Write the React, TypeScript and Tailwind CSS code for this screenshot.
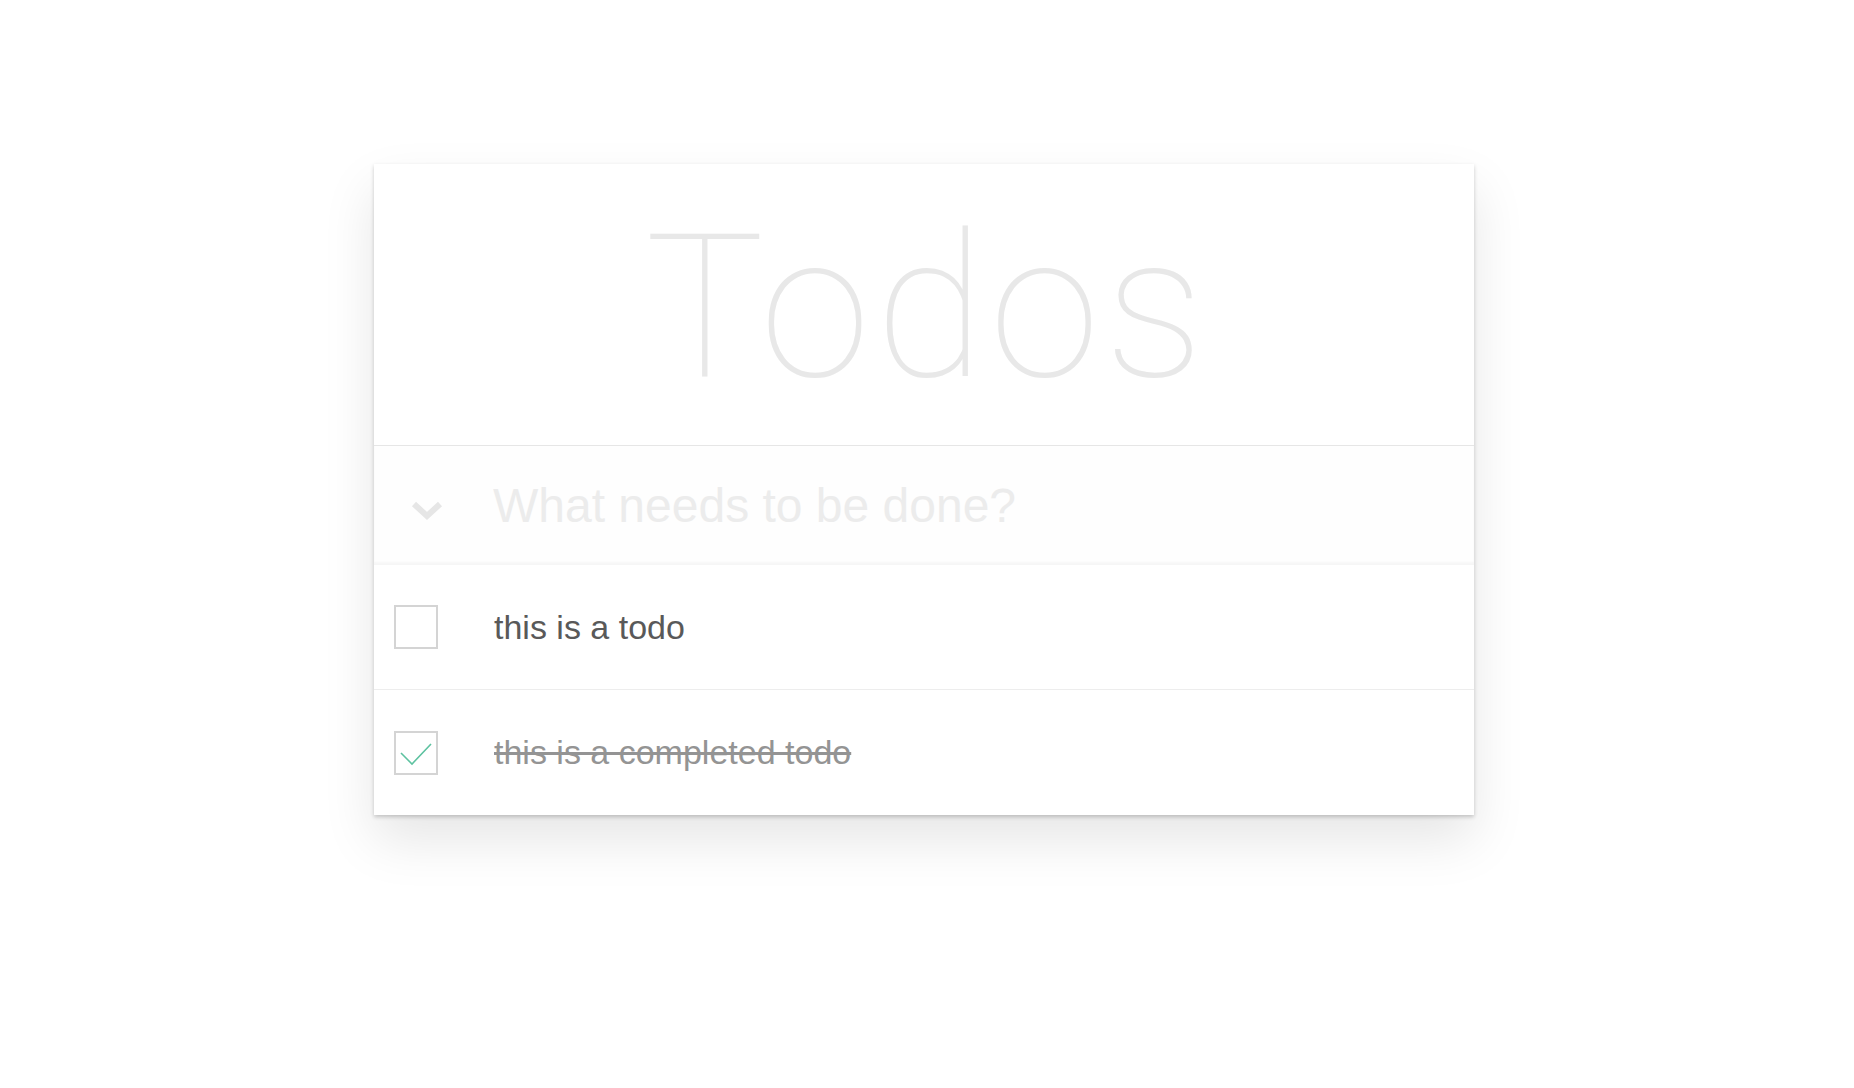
export default function App() {
  const todos = [
    { id: 1, title: "this is a todo", completed: false },
    { id: 2, title: "this is a completed todo", completed: true },
  ];

  return (
    <div className="min-h-screen bg-white pt-[164px] font-['Liberation_Sans',Arial,sans-serif]">
      <section className="ml-[374px] w-[1100px] bg-white shadow-[0_2px_4px_0_rgba(0,0,0,0.2),0_25px_50px_0_rgba(0,0,0,0.1)]">
        <header className="border-b border-[#e6e6e6]">
          <h1 className="h-[281px] pt-[44px] pl-[6px] text-center font-['Roboto',sans-serif] text-[200px] font-thin leading-none tracking-[5px] text-[#e8e8e8]">
            Todos
          </h1>
        </header>

        <div className="flex h-[119px] items-center bg-[#fefefe] pl-[37px] shadow-[inset_0_-3px_2px_rgba(0,0,0,0.03)]">
          <svg width="32" height="20" viewBox="0 0 32 20" className="mt-[10px] shrink-0">
            <path d="M3 3 L16 15 L29 3" fill="none" stroke="#e6e6e6" strokeWidth="6" />
          </svg>
          <input
            type="text"
            placeholder="What needs to be done?"
            className="ml-[50px] flex-1 bg-transparent text-[48px] text-[#4d4d4d] outline-none placeholder:text-[#ececec]"
          />
        </div>

        <ul>
          {todos.map((todo, i) => (
            <li
              key={todo.id}
              className={
                i === 0
                  ? "flex h-[125px] items-center border-b border-[#ededed] pl-[20px]"
                  : "flex h-[125px] items-center pl-[20px]"
              }
            >
              <div className="flex h-[44px] w-[44px] shrink-0 items-center justify-center border-2 border-[#d4d4d4]">
                {todo.completed && (
                  <svg width="36" height="28" viewBox="0 0 36 28">
                    <path d="M3 14 L14 25 L33 5" fill="none" stroke="#5dc2a0" strokeWidth="1.6" />
                  </svg>
                )}
              </div>
              <span
                className={
                  todo.completed
                    ? "ml-[56px] text-[34px] text-[#949494] line-through"
                    : "ml-[56px] text-[34px] text-[#595959]"
                }
              >
                {todo.title}
              </span>
            </li>
          ))}
        </ul>
      </section>
    </div>
  );
}
